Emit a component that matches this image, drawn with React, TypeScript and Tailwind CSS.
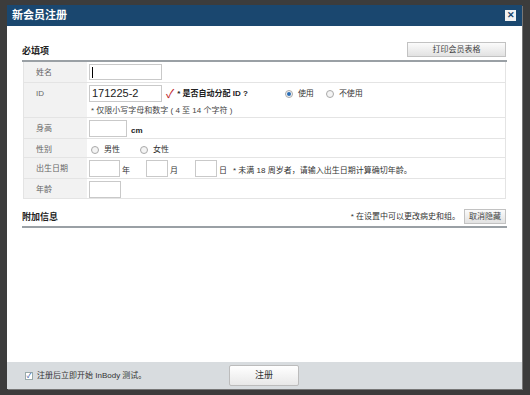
const font = { fontFamily: '"Liberation Sans", "Noto Sans CJK SC", sans-serif' };

const Radio = ({ checked, label }: { checked?: boolean; label: string }) => (
  <label className="flex items-center gap-[5px]">
    <span className="flex h-[8px] w-[8px] items-center justify-center rounded-full border border-[#a9a9a9] bg-[#f4f4f4]">
      {checked && <span className="h-[4px] w-[4px] rounded-full bg-[#2a6db5]" />}
    </span>
    <span className="text-[8px] text-[#333]">{label}</span>
  </label>
);

const Box = ({ w, value }: { w: string; value?: string }) => (
  <div className={`${w} flex h-[17px] items-center border border-[#c9c9c9] bg-white px-[2px] text-[11px] text-[#222]`}>
    {value}
  </div>
);

const Row = ({ label, h, children }: { label: string; h: string; children: any }) => (
  <div className={`flex ${h} border-b border-[#e4e4e4]`}>
    <div className="w-[63px] shrink-0 bg-[#f2f2f2] pl-[12px] pt-[5px] text-[8px] text-[#666]">{label}</div>
    <div className="flex-1 pl-[2px]">{children}</div>
  </div>
);

export default function App() {
  return (
    <div className="h-[395px] w-[530px] overflow-hidden bg-[#3c3c3c] pl-[7px] pt-[5px]" style={font}>
      <div className="flex h-[384px] w-[515px] flex-col bg-white shadow-[1px_1px_0_#777]">
        <div className="flex h-[21px] items-center justify-between bg-[#1a476f] pl-[5px] pr-[6px]">
          <span className="text-[11px] font-bold text-white">新会员注册</span>
          <span className="flex h-[11px] w-[11px] items-center justify-center bg-[#f2f2f2] text-[9px] font-bold leading-none text-[#1a476f]">✕</span>
        </div>
        <div className="flex-1 px-[15px] pt-[16px]">
          <div className="flex items-end justify-between border-b-2 border-[#9aa0a5] pb-[2px]">
            <span className="text-[9px] font-bold text-[#222]">必填项</span>
            <button className="mb-[1px] mr-[1px] h-[15px] w-[99px] border border-[#c2c2c2] bg-gradient-to-b from-[#fbfbfb] to-[#e2e2e2] text-[8px] text-[#444]">打印会员表格</button>
          </div>
          <div className="ml-[1px] mr-[1px] border-x border-[#e4e4e4]">
            <Row label="姓名" h="h-[21px]">
              <div className="pt-[2px]">
                <div className="flex h-[16px] w-[73px] items-center border border-[#c9c9c9] pl-[2px]">
                  <span className="h-[11px] w-[1px] bg-black" />
                </div>
              </div>
            </Row>
            <Row label="ID" h="h-[35px]">
              <div className="flex items-center pt-[2px]">
                <Box w="w-[73px]" value="171225-2" />
                <span className="ml-[4px] text-[12px] leading-none text-[#c0272d]">✓</span>
                <span className="ml-[3px] text-[8px] font-bold text-[#222]">* 是否自动分配 ID ?</span>
                <div className="ml-[37px] flex gap-[12px]">
                  <Radio checked label="使用" />
                  <Radio label="不使用" />
                </div>
              </div>
              <div className="mt-[3px] pl-[2px] text-[8px] text-[#444]">* 仅限小写字母和数字 ( 4 至 14 个字符 )</div>
            </Row>
            <Row label="身高" h="h-[21px]">
              <div className="flex items-end gap-[4px] pt-[2px]">
                <Box w="w-[38px]" />
                <span className="text-[8px] font-bold text-[#222]">cm</span>
              </div>
            </Row>
            <Row label="性别" h="h-[19px]">
              <div className="flex gap-[20px] pl-[2px] pt-[5px]">
                <Radio label="男性" />
                <Radio label="女性" />
              </div>
            </Row>
            <Row label="出生日期" h="h-[21px]">
              <div className="flex items-end pt-[2px] text-[8px] text-[#333]">
                <Box w="w-[31px]" />
                <span className="ml-[2px] w-[24px]">年</span>
                <Box w="w-[22px]" />
                <span className="ml-[2px] w-[25px]">月</span>
                <Box w="w-[22px]" />
                <span className="ml-[2px]">日</span>
                <span className="ml-[6px]">* 未满 18 周岁者，请输入出生日期计算确切年龄。</span>
              </div>
            </Row>
            <Row label="年龄" h="h-[20px]">
              <div className="pt-[2px]">
                <Box w="w-[32px]" />
              </div>
            </Row>
          </div>
          <div className="mt-[10px] flex items-end justify-between border-b-2 border-[#9aa0a5] pb-[2px]">
            <span className="text-[9px] font-bold text-[#222]">附加信息</span>
            <div className="flex items-center gap-[4px]">
              <span className="text-[8px] text-[#333]">* 在设置中可以更改病史和组。</span>
              <button className="mr-[1px] h-[15px] w-[42px] border border-[#c2c2c2] bg-gradient-to-b from-[#fbfbfb] to-[#e2e2e2] text-[8px] text-[#444]">取消隐藏</button>
            </div>
          </div>
        </div>
        <div className="flex h-[27px] items-center bg-[#d8dcdf] pl-[18px]">
          <div className="flex w-[204px] items-center gap-[4px]">
            <span className="flex h-[8px] w-[8px] items-center justify-center border border-[#9aa] bg-white text-[7px] leading-none text-[#2a4f9a]">✓</span>
            <span className="text-[8px] text-[#333]">注册后立即开始 InBody 测试。</span>
          </div>
          <button className="h-[21px] w-[70px] rounded-[2px] border border-[#bcbcbc] bg-gradient-to-b from-[#ffffff] to-[#e8e8e8] text-[9px] text-[#333]">注册</button>
        </div>
      </div>
    </div>
  );
}
